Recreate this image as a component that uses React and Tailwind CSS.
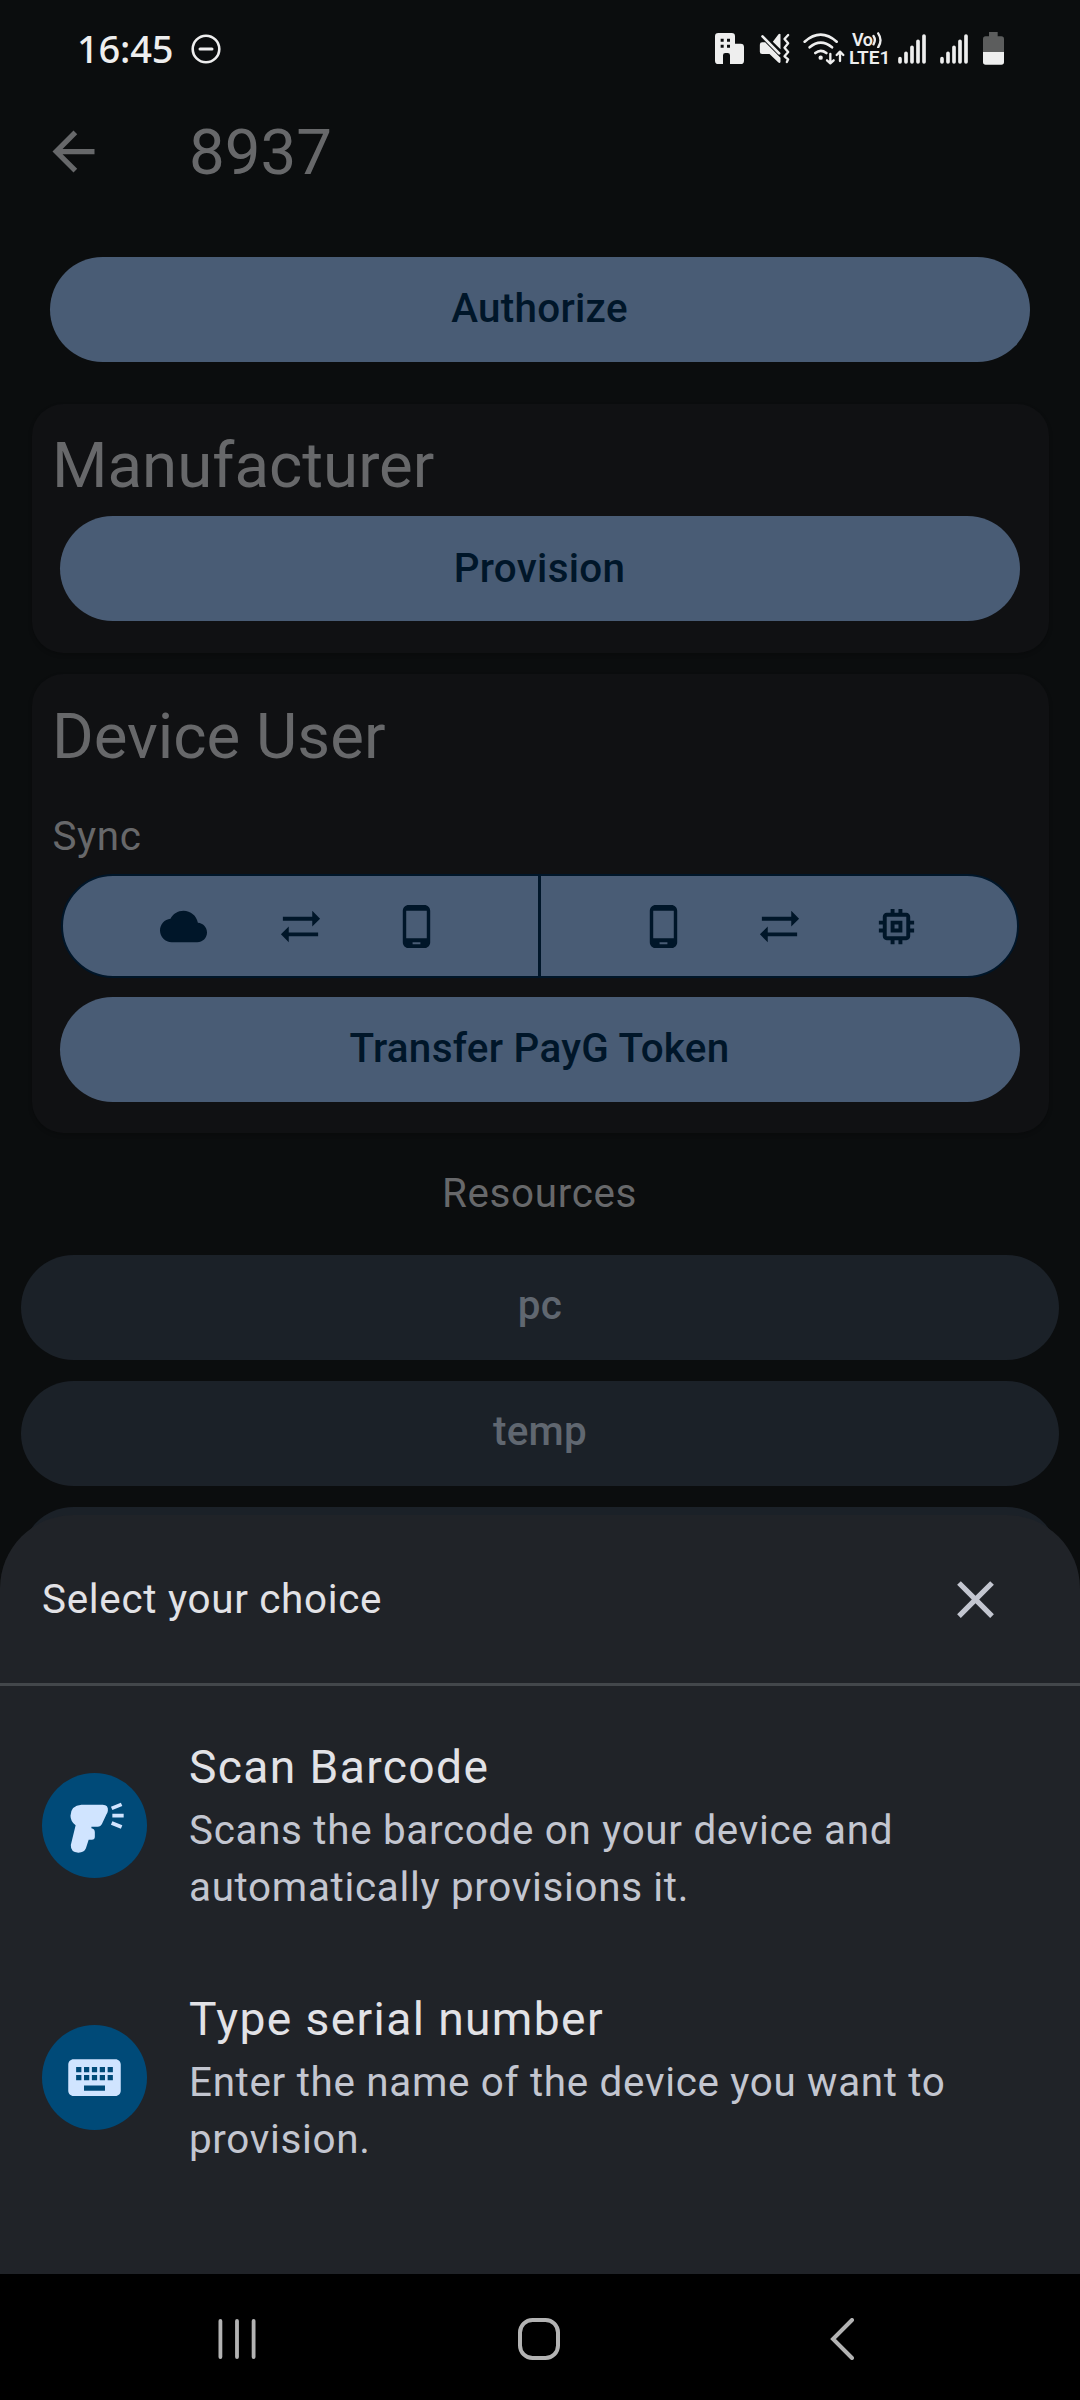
import React from "react";

const PATHS = {
  back: "M20 11H7.83l5.59-5.59L12 4l-8 8 8 8 1.41-1.41L7.83 13H20v-2z",
  cloud: "M19.35 10.04C18.67 6.59 15.64 4 12 4 9.11 4 6.6 5.64 5.35 8.04 2.34 8.36 0 10.91 0 14c0 3.31 2.69 6 6 6h13c2.76 0 5-2.24 5-5 0-2.64-2.05-4.78-4.65-4.96z",
  sync: "M22 8l-4-4v3H3v2h15v3l4-4zM2 16l4 4v-3h15v-2H6v-3l-4 4z",
  phone: "M16 1H8C6.34 1 5 2.34 5 4v16c0 1.66 1.34 3 3 3h8c1.66 0 3-1.34 3-3V4c0-1.66-1.34-3-3-3zm-2 20h-4v-1h4v1zm3.25-3H6.75V4h10.5v14z",
  chip: "M15 9H9v6h6V9zm-2 4h-2v-2h2v2zm8-2V9h-2V7c0-1.1-.9-2-2-2h-2V3h-2v2h-2V3H9v2H7c-1.1 0-2 .9-2 2v2H3v2h2v2H3v2h2v2c0 1.1.9 2 2 2h2v2h2v-2h2v2h2v-2h2c1.1 0 2-.9 2-2v-2h2v-2h-2v-2h2zm-4 6H7V7h10v10z",
  close: "M19 6.41L17.59 5 12 10.59 6.41 5 5 6.41 10.59 12 5 17.59 6.41 19 12 13.41 17.59 19 19 17.59 13.41 12z",
  keyboard: "M20 5H4c-1.1 0-1.99.9-1.99 2L2 17c0 1.1.9 2 2 2h16c1.1 0 2-.9 2-2V7c0-1.1-.9-2-2-2zm-9 3h2v2h-2V8zm0 3h2v2h-2v-2zM8 8h2v2H8V8zm0 3h2v2H8v-2zm-1 2H5v-2h2v2zm0-3H5V8h2v2zm9 7H8v-2h8v2zm0-4h-2v-2h2v2zm0-3h-2V8h2v2zm3 3h-2v-2h2v2zm0-3h-2V8h2v2z",
};

function Icon({ name, className }) {
  return (
    <svg viewBox="0 0 24 24" fill="currentColor" className={`shrink-0 ${className}`}>
      <path d={PATHS[name]} />
    </svg>
  );
}

function Signal({ className }) {
  return (
    <svg viewBox="624 70 84 90" className={`h-[30px] w-[28px] shrink-0 ${className}`} stroke="currentColor" strokeWidth="11" strokeLinecap="round">
      <path d="M630 144V154M648 128V154M666 110V154M684 92V154M702 76V154" />
    </svg>
  );
}

function StatusBar() {
  return (
    <div className="flex h-[97px] shrink-0 items-center pl-[77px] text-[#eeeeee]">
      <span className="w-[113px] pb-px font-['Noto_Sans'] text-[38px] font-medium leading-[96px] tracking-[-0.2px]">16:45</span>
      <svg viewBox="0 0 32 32" className="h-8 w-8" fill="none" stroke="currentColor">
        <circle cx="16" cy="16" r="13.3" strokeWidth="2.6" />
        <path d="M10 16h12" strokeWidth="3" strokeLinecap="round" />
      </svg>
      <svg viewBox="75 69 87 93" className="ml-[493px] h-[31px] w-[29px] shrink-0" fill="currentColor">
        <path fillRule="evenodd" d="M85 69H125Q135 69 135 79V101H152Q162 101 162 111V152Q162 162 152 162H120V136Q120 129 113 129H106Q99 129 99 136V162H85Q75 162 75 152V79Q75 69 85 69ZM92 86v9h9v-9zM111 86v9h9v-9zM92 104v9h9v-9zM111 104v9h9v-9z" />
      </svg>
      <svg viewBox="208 69 92 93" className="ml-[15px] h-[31px] w-[31px] shrink-0" fill="currentColor">
        <path d="M272 73V118L249 95L266 73Q270 69 272 73ZM217 97H226L272 143V156Q270 161 265 157L239 132H217Q210 132 210 125V104Q210 97 217 97Z" />
        <path d="M218 79L268 130" fill="none" stroke="currentColor" strokeWidth="8" strokeLinecap="round" />
        <path d="M295 75L284 87L295 100L284 113L295 126L284 139L295 148L291 156" fill="none" stroke="currentColor" strokeWidth="7" strokeLinecap="round" strokeLinejoin="round" />
      </svg>
      <svg viewBox="339 67 126 96" className="ml-[13px] h-[32px] w-[42px] shrink-0" fill="none" stroke="currentColor" strokeWidth="8" strokeLinecap="round" strokeLinejoin="round">
        <path d="M344 93Q392 51 440 93M359 110Q392 82 426 110M376 127Q392 114 409 127" />
        <circle cx="392" cy="141" r="6.5" fill="currentColor" stroke="none" />
        <path d="M421 130V157M411 149L421 158L431 149M450 151V124M440 133L450 123L460 133" strokeWidth="7" />
      </svg>
      <div className="ml-[4px] flex w-[39px] flex-col font-['Roboto'] font-semibold">
        <div className="flex h-[16px] items-center pl-[3px]">
          <span className="text-[18px] leading-[16px] tracking-[-0.5px]">Vo</span>
          <svg viewBox="552 68 32 48" className="h-[16px] w-[11px] shrink-0" fill="none" stroke="currentColor" strokeWidth="7" strokeLinecap="round">
            <path d="M556 80Q564 92 556 105M570 72Q584 92 570 114" />
          </svg>
        </div>
        <span className="mt-px text-[19px] leading-[17px]">LTE1</span>
      </div>
      <Signal className="ml-[10px]" />
      <Signal className="ml-[14px]" />
      <svg viewBox="879 66 63 99" className="ml-[15px] h-[33px] w-[21px] shrink-0">
        <path d="M897 66H923V79H934Q942 79 942 87V126H879V87Q879 79 887 79H897Z" fill="#5c5d5d" />
        <path d="M879 126H942V156Q942 164 934 164H887Q879 164 879 156Z" fill="currentColor" />
      </svg>
    </div>
  );
}

function Button({ children, className }) {
  return (
    <div className={`flex h-[105px] shrink-0 items-center justify-center rounded-full bg-[#495c75] pr-px text-[40.4px] font-medium tracking-[0.29px] text-[#001629] ${className}`}>
      {children}
    </div>
  );
}

function Resource({ children }) {
  return (
    <div className="flex h-[105px] shrink-0 items-center justify-center rounded-full bg-[#1b2128] pb-[0.5px] text-[40.4px] font-medium tracking-[0.29px] text-[#606770]">
      {children}
    </div>
  );
}

function Choice({ icon, title, text }) {
  return (
    <div className="flex h-[252px] items-center gap-[42px] pl-[42px]">
      <div className="flex h-[105px] w-[105px] shrink-0 items-center justify-center rounded-full bg-[#004a78] text-[#d0e4ff]">{icon}</div>
      <div className="flex w-[800px] flex-col">
        <h2 className="text-[46.2px] leading-[64px] tracking-[1.37px] text-[#e2e2e6]">{title}</h2>
        <p className="mt-[3px] text-[40.4px] leading-[57px] tracking-[0.68px] text-[#c3c6d0]">{text}</p>
      </div>
    </div>
  );
}

function ScannerGun() {
  return (
    <svg viewBox="122 157 306 315" preserveAspectRatio="none" className="h-[105px] w-[105px]" fill="currentColor">
      <path d="M237 252H299Q316 252 314 270Q313 276 310 281L297 309Q293 318 284 318H266V323Q276 325 276 335V348Q276 357 267 357H258L250 383Q245 396 228 396Q205 395 206 373L220 314Q205 302 205 285Q206 254 237 252Z" />
      <path d="M325 263L354 251M327 285H360M325 307L354 319" fill="none" stroke="currentColor" strokeWidth="11" />
    </svg>
  );
}

function BottomSheet() {
  return (
    <div className="absolute inset-x-0 bottom-0 flex h-[885px] flex-col">
      <div className="flex flex-1 flex-col rounded-t-[73.5px] bg-[#202328]">
        <div className="flex h-[168px] shrink-0 items-center justify-between pl-[42px] pr-[73px]">
          <span className="pt-[2px] text-[40.4px] leading-[56px] tracking-[0.7px] text-[#e2e2e6]">Select your choice</span>
          <Icon name="close" className="h-[63px] w-[63px] text-[#c3c6d0]" />
        </div>
        <div className="h-[3px] shrink-0 bg-[#43474b]" />
        <div className="flex flex-col pt-[13px]">
          <Choice icon={<ScannerGun />} title="Scan Barcode" text="Scans the barcode on your device and automatically provisions it." />
          <Choice icon={<Icon name="keyboard" className="h-[63px] w-[63px]" />} title="Type serial number" text="Enter the name of the device you want to provision." />
        </div>
      </div>
      <div className="flex h-[126px] shrink-0 items-center bg-black pl-[218px] pt-[3px] text-[#b3b3b3]">
        <svg viewBox="0 0 38 42" className="h-[42px] w-[38px] shrink-0" stroke="currentColor" strokeWidth="3.8" strokeLinecap="round">
          <path d="M2.4 3v36M19 3v36M35.6 3v36" />
        </svg>
        <svg viewBox="0 0 42 42" className="ml-[262px] h-[42px] w-[42px] shrink-0" fill="none" stroke="currentColor" strokeWidth="4">
          <rect x="2" y="2" width="38" height="38" rx="12.5" />
        </svg>
        <svg viewBox="0 0 26 42" className="ml-[269px] h-[42px] w-[26px] shrink-0" fill="none" stroke="currentColor" strokeWidth="4" strokeLinecap="round" strokeLinejoin="miter">
          <path d="M23 2L4 21l19 19" />
        </svg>
      </div>
    </div>
  );
}

export default function App() {
  return (
    <div className="relative flex h-[2400px] w-[1080px] flex-col overflow-hidden bg-[#0b0d0e] font-['Roboto',sans-serif] text-[#67686a]">
      <StatusBar />
      <div className="flex h-[109px] shrink-0 items-center pl-[42px]">
        <Icon name="back" className="h-[63px] w-[63px]" />
        <h1 className="ml-[84px] pt-[3px] text-[63.6px] leading-[84px]">8937</h1>
      </div>
      <Button className="mx-[50px] mt-[50.5px] pt-px">Authorize</Button>
      <section className="mx-[31.5px] mt-[42px] flex h-[249px] shrink-0 flex-col rounded-[31.5px] bg-[#101113] pt-[20px] shadow-[0_2px_4px_rgba(0,0,0,0.2)]">
        <h2 className="pl-[20.5px] text-[63.6px] leading-[84px]">Manufacturer</h2>
        <Button className="mx-[28.5px] mt-[8.5px] pt-px">Provision</Button>
      </section>
      <section className="mx-[31.5px] mt-[21.5px] flex h-[459px] shrink-0 flex-col rounded-[31.5px] bg-[#101113] pt-[20.5px] shadow-[0_2px_4px_rgba(0,0,0,0.2)]">
        <h2 className="pl-[20.5px] text-[63.6px] leading-[84px]">Device User</h2>
        <h3 className="mt-[30px] pl-[21px] text-[40.4px] leading-[56px] tracking-[0.6px]">Sync</h3>
        <div className="mx-[29.5px] mt-[9px] flex h-[104px] shrink-0 overflow-hidden rounded-full border-2 border-[#001629] bg-[#495c75] text-[#001629]">
          <div className="flex flex-1 items-center justify-center gap-[69.5px] pr-px pt-px">
            <Icon name="cloud" className="h-[47px] w-[47px]" />
            <Icon name="sync" className="h-[47px] w-[47px]" />
            <Icon name="phone" className="h-[47px] w-[47px]" />
          </div>
          <div className="w-[3px] bg-[#001629]" />
          <div className="flex flex-1 items-center justify-center gap-[69.5px] pl-[1.5px] pt-px">
            <Icon name="phone" className="h-[47px] w-[47px]" />
            <Icon name="sync" className="h-[47px] w-[47px]" />
            <Icon name="chip" className="h-[47px] w-[47px]" />
          </div>
        </div>
        <Button className="mx-[28.5px] mt-[19px]">Transfer PayG Token</Button>
      </section>
      <h3 className="mt-[32.5px] pr-px text-center text-[40.4px] leading-[56px] tracking-[0.65px]">Resources</h3>
      <div className="mx-[21px] mt-[33px] flex flex-col gap-[21px]">
        <Resource>pc</Resource>
        <Resource>temp</Resource>
        <Resource />
      </div>
      <BottomSheet />
    </div>
  );
}
